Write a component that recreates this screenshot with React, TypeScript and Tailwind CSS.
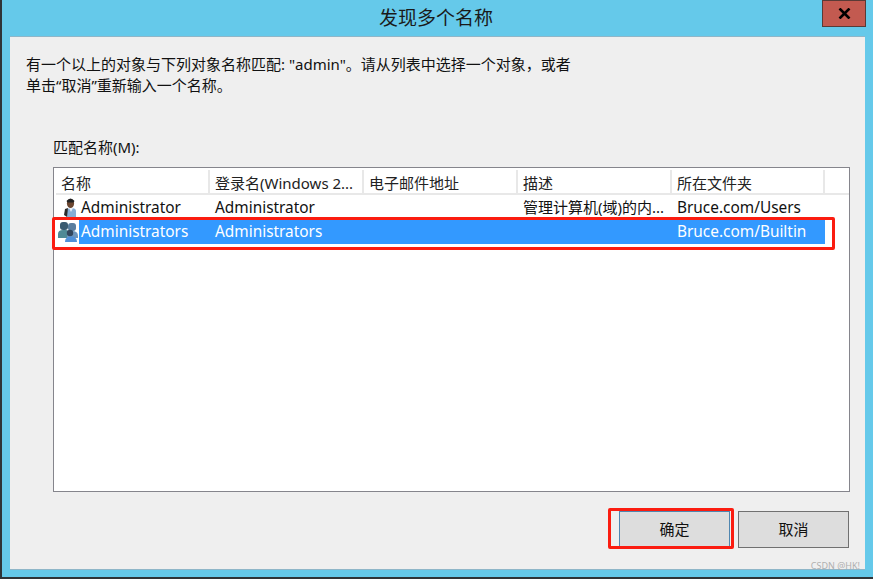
const font = "font-['Noto_Sans','Noto_Sans_CJK_SC',sans-serif]";

const columns = [
  { label: '名称', width: 'w-[154px]' },
  { label: '登录名(Windows 2...', width: 'w-[154px]' },
  { label: '电子邮件地址', width: 'w-[154px]' },
  { label: '描述', width: 'w-[154px]' },
  { label: '所在文件夹', width: 'w-[153px]' },
];

function UserIcon() {
  return (
    <svg width="18" height="21" viewBox="0 0 18 21" className="shrink-0">
      <path d="M6 21 V14 Q6 11 10 11 Q15 11 15 14 V21 Z" fill="#86aed6" />
      <path d="M8 11 L10 15 L12 11 Z" fill="#e8f0f8" />
      <ellipse cx="9.5" cy="6.5" rx="3.6" ry="4.6" fill="#6b4630" />
      <path d="M5.5 4 Q9.5 -1 13.5 4 L12.5 5.5 H6.5 Z" fill="#222" />
      <path d="M6 20 L3 18 L4 12 L7 11 Z" fill="#2b2b2b" />
    </svg>
  );
}

function GroupIcon() {
  return (
    <svg width="22" height="20" viewBox="0 0 22 20" className="shrink-0">
      <rect x="2" y="0" width="8" height="8" rx="3" fill="#3a5a70" />
      <path d="M0 16 V12 Q0 8 5 8 H8 Q11 8 11 12 V16 Z" fill="#4f8a96" />
      <rect x="10" y="1" width="8" height="8" rx="3" fill="#5a7ea0" />
      <path d="M9 14 Q9 9 14 9 Q20 9 20 14 V16 H9 Z" fill="#6f95bb" />
      <circle cx="12" cy="11" r="3.2" fill="#33465c" />
      <path d="M7 20 Q7 14.5 13 14.5 Q19 14.5 19 20 Z" fill="#4f90d8" />
    </svg>
  );
}

export default function App() {
  return (
    <div className={`${font} relative h-[579px] w-[873px] overflow-hidden bg-[#65c9ea] text-[#111] border-l-2 border-b-2 border-[#2f3438]`}>
      <div className="relative flex h-[36px] items-center justify-center pr-[3px] text-[19px] text-[#1a1a1a]">
        发现多个名称
        <div className="absolute right-[7px] top-0 flex h-[27px] w-[44px] items-center justify-center border border-[#5a3a36] bg-[#c35a50]">
          <svg width="13" height="11" viewBox="0 0 13 11">
            <path d="M1.5 0.5 L11.5 10.5 M11.5 0.5 L1.5 10.5" stroke="#000" strokeWidth="2.6" />
          </svg>
        </div>
      </div>

      <div className="ml-[8px] flex h-[534px] w-[855px] flex-col border-t border-b border-[#8fb6c8] bg-[#efefef] pl-[16px] pr-[15px]">
        <div className="mt-[17px] text-[15px] leading-[21px]">
          <p>有一个以上的对象与下列对象名称匹配: "admin"。请从列表中选择一个对象，或者</p>
          <p>单击“取消”重新输入一个名称。</p>
        </div>

        <div className="mt-[41px] ml-[27px] text-[15px] leading-[20px]">匹配名称(M):</div>

        <div className="mt-[10px] ml-[27px] flex h-[325px] w-[797px] flex-col border border-[#85858c] bg-white pl-[2px] pt-[2px] text-[15.4px]">
          <div className="flex h-[25px] border-b-2 border-[#e8e8e8]">
            {columns.map((c) => (
              <div key={c.label} className={`${c.width} flex items-center border-r-2 border-[#e8e8e8] pl-[5px] pt-[3px] text-[15px] whitespace-nowrap overflow-hidden text-[#222]`}>
                {c.label}
              </div>
            ))}
          </div>

          <div className="mt-[1px] flex h-[24px] items-center">
            <div className="flex w-[154px] items-center pl-[5px]">
              <UserIcon />
              <span className="ml-[2px]">Administrator</span>
            </div>
            <div className="w-[154px] pl-[5px]">Administrator</div>
            <div className="w-[154px]" />
            <div className="w-[154px] pb-[2px] pl-[5px] text-[15px] whitespace-nowrap">管理计算机(域)的内...</div>
            <div className="w-[153px] pl-[5px]">Bruce.com/Users</div>
          </div>

          <div className="flex h-[24px] items-center">
            <div className="flex w-[23px] shrink-0 items-center pl-[2px]">
              <GroupIcon />
            </div>
            <div className="flex h-full w-[746px] items-center bg-[#3399ff] text-white">
              <div className="w-[136px] pl-[2px]">Administrators</div>
              <div className="w-[308px]">Administrators</div>
              <div className="w-[154px]" />
              <div>Bruce.com/Builtin</div>
            </div>
          </div>
        </div>

        <div className="mt-[19px] flex justify-end gap-[8px] pr-[1px] text-[15px]">
          <button className="h-[37px] w-[111px] border border-[#4f86b0] bg-[#dddddd]">确定</button>
          <button className="h-[37px] w-[111px] border border-[#707070] bg-[#dddddd]">取消</button>
        </div>
      </div>

      {/* red annotation boxes */}
      <div className="absolute left-[50px] top-[217px] h-[33px] w-[783px] rounded-[2px] border-[3px] border-[#fb1c10]" />
      <div className="absolute left-[606px] top-[508px] h-[41px] w-[126px] rounded-[2px] border-[3px] border-[#fb1c10]" />
      <div className="absolute right-[13px] top-[560px] text-[9px] leading-[11px] text-[#b0b0b0]">CSDN @HK!</div>
    </div>
  );
}
